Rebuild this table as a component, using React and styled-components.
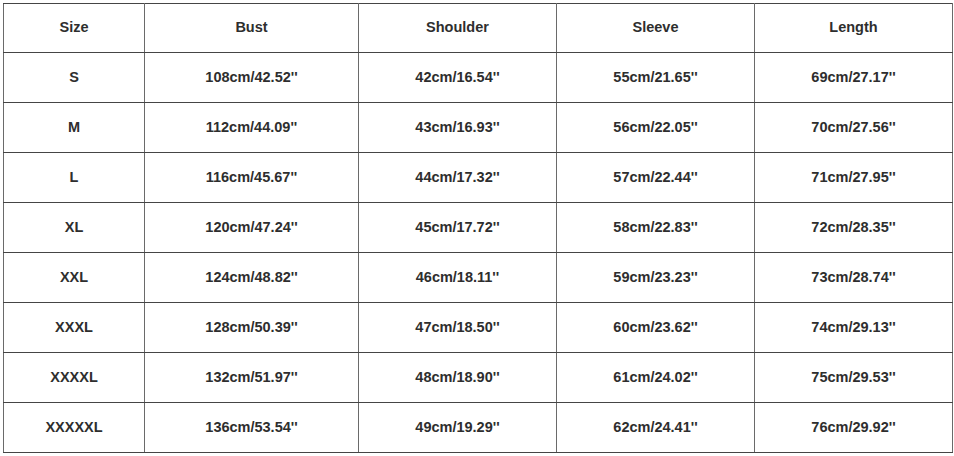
import React from "react";
import styled, { createGlobalStyle } from "styled-components";

const GlobalStyle = createGlobalStyle`
  html, body {
    margin: 0;
    padding: 0;
    background: #ffffff;
  }
`;

const Page = styled.div`
  padding: 3px 0 0 3px;
  width: 954px;
  height: 456px;
  box-sizing: border-box;
  background: #fff;
`;

const Table = styled.table`
  border-collapse: collapse;
  table-layout: fixed;
  width: 949px;
  font-family: "Liberation Sans", Arial, sans-serif;
  font-weight: bold;
  font-size: 14.5px;
  color: #2e2e2e;
`;

const Cell = styled.td`
  height: ${(p) => (p.$head ? 46 : 47)}px;
  padding: 0 0 2px 0;
  text-align: center;
  vertical-align: middle;
  border: 1px solid #454545;
  border-left-color: #6a6a6a;
  border-right-color: #6a6a6a;
`;

const HeadCell = styled(Cell).attrs({ as: "th", $head: true })`
  font-weight: bold;
`;

const columns = [
  { name: "Size", width: 141 },
  { name: "Bust", width: 214 },
  { name: "Shoulder", width: 198 },
  { name: "Sleeve", width: 198 },
  { name: "Length", width: 198 },
];

const rows = [
  ["S", "108cm/42.52''", "42cm/16.54''", "55cm/21.65''", "69cm/27.17''"],
  ["M", "112cm/44.09''", "43cm/16.93''", "56cm/22.05''", "70cm/27.56''"],
  ["L", "116cm/45.67''", "44cm/17.32''", "57cm/22.44''", "71cm/27.95''"],
  ["XL", "120cm/47.24''", "45cm/17.72''", "58cm/22.83''", "72cm/28.35''"],
  ["XXL", "124cm/48.82''", "46cm/18.11''", "59cm/23.23''", "73cm/28.74''"],
  ["XXXL", "128cm/50.39''", "47cm/18.50''", "60cm/23.62''", "74cm/29.13''"],
  ["XXXXL", "132cm/51.97''", "48cm/18.90''", "61cm/24.02''", "75cm/29.53''"],
  ["XXXXXL", "136cm/53.54''", "49cm/19.29''", "62cm/24.41''", "76cm/29.92''"],
];

export default function App() {
  return (
    <>
      <GlobalStyle />
      <Page>
        <Table>
          <colgroup>
            {columns.map((c) => (
              <col key={c.name} style={{ width: c.width }} />
            ))}
          </colgroup>
          <thead>
            <tr>
              {columns.map((c) => (
                <HeadCell key={c.name}>{c.name}</HeadCell>
              ))}
            </tr>
          </thead>
          <tbody>
            {rows.map((r) => (
              <tr key={r[0]}>
                {r.map((v, i) => (
                  <Cell key={i}>{v}</Cell>
                ))}
              </tr>
            ))}
          </tbody>
        </Table>
      </Page>
    </>
  );
}
